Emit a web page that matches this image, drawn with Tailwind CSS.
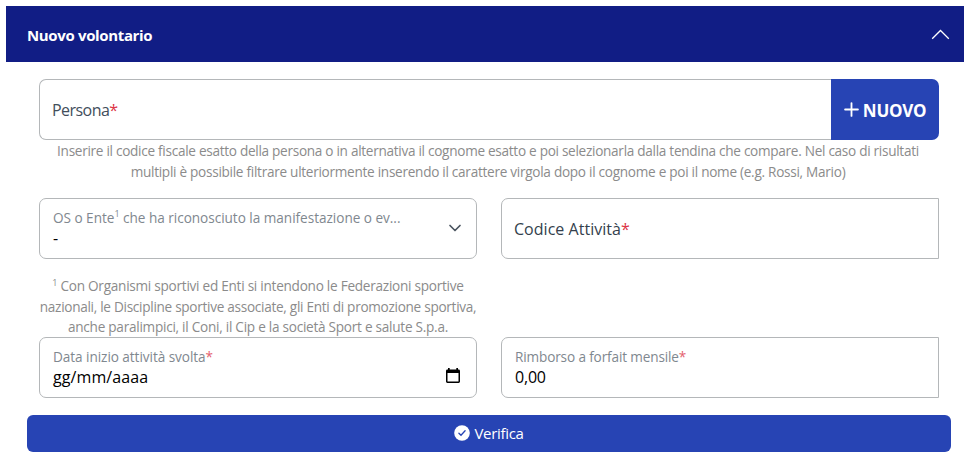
<!DOCTYPE html>
<html lang="it">
<head>
<meta charset="utf-8">
<title>Nuovo volontario</title>
<script src="https://cdn.jsdelivr.net/npm/@tailwindcss/browser@4"></script>
</head>
<body class="h-[458px] overflow-hidden bg-white pt-[6px] pl-[6px] font-['Open_Sans','Noto_Sans',sans-serif] text-black">
<header class="flex h-14 items-center justify-between bg-[#111d85] pr-[14px] pl-[21px] text-white">
  <h1 class="pt-[2px] text-[15px] font-bold tracking-[-0.35px]">Nuovo volontario</h1>
  <svg class="h-[11px] w-[19px]" viewBox="0 0 19 11" fill="none" stroke="currentColor" stroke-width="1.3"><path d="M1.2 9.8 9.5 1.5l8.300 8.300"/></svg>
</header>
<main class="pt-[17px] pr-[13px] pl-[21px]">
  <div class="pr-[12px] pl-3">
    <div class="flex h-[61px]">
      <label class="flex flex-1 items-center rounded-l-[7px] border border-r-0 border-[#b4b7b9] pt-px pl-3 text-[16px] tracking-[-0.55px] text-[#424e5b]">Persona<span class="text-[#dc3545]">*</span></label>
      <button class="flex w-[108px] items-center justify-center gap-1 rounded-r-[7px] bg-[#2744b4] text-[17px] font-bold text-white">
        <svg class="h-[15px] w-[15px]" viewBox="0 0 14 14" stroke="currentColor" stroke-width="1.7" stroke-linecap="round"><path d="M7 1v12M1 7h12"/></svg>
        <span class="pt-[2px] tracking-[-0.3px]">NUOVO</span>
      </button>
    </div>
    <p class="-ml-[2px] pt-px text-center text-[13.600px] leading-[20.500px] whitespace-nowrap text-[#8b8b8b]"><span class="tracking-[-0.29px]">Inserire il codice fiscale esatto della persona o in alternativa il cognome esatto e poi selezionarla dalla tendina che compare. Nel caso di risultati</span><br><span class="tracking-[-0.28px]">multipli è possibile filtrare ulteriormente inserendo il carattere virgola dopo il cognome e poi il nome (e.g. Rossi, Mario)</span></p>
    <div class="mt-4 grid grid-cols-[438px_438px] gap-x-6">
      <div>
        <div class="flex h-[61px] items-center justify-between rounded-[7px] border border-[#b4b7b9] pr-[14px] pl-[13px]">
          <div>
            <div class="text-[13.600px] leading-[20px] tracking-[-0.03px] whitespace-nowrap text-[#7f888f]">OS o Ente<sup class="-top-[6px] text-[9px]">1</sup> che ha riconosciuto la manifestazione o ev...</div>
            <div class="pb-[2px] text-[16px] leading-[20px]">-</div>
          </div>
          <svg class="h-[9px] w-[14px]" viewBox="0 0 14 9" fill="none" stroke="#4b5560" stroke-width="1.700" stroke-linecap="round" stroke-linejoin="round"><path d="m2 1.500 5 5 5-5"/></svg>
        </div>
        <p class="-mb-px pt-[17px] text-center text-[13.600px] leading-[20.500px] whitespace-nowrap text-[#8b8b8b]"><span class="tracking-[-0.26px]"><sup class="-top-[5px] text-[9px]">1</sup> Con Organismi sportivi ed Enti si intendono le Federazioni sportive</span><br><span class="tracking-[-0.29px]">nazionali, le Discipline sportive associate, gli Enti di promozione sportiva,</span><br><span class="tracking-[-0.26px]">anche paralimpici, il Coni, il Cip e la società Sport e salute S.p.a.</span></p>
      </div>
      <label class="flex h-[61px] items-center rounded-l-[7px] border border-[#b4b7b9] pt-px pl-3 text-[16px] tracking-[0.03px] text-[#343f4d]">Codice Attività<span class="text-[#dc3545]">*</span></label>
    </div>
    <div class="grid grid-cols-[438px_438px] gap-x-6">
      <div class="flex h-[61px] items-center justify-between rounded-[7px] border border-[#b4b7b9] pr-[16px] pl-[13px]">
        <div>
          <div class="pt-px text-[13.600px] leading-[20px] tracking-[-0.06px] text-[#7f888f]">Data inizio attività svolta<span class="text-[#e4606d]">*</span></div>
          <div class="pb-px text-[16px] leading-[20px] tracking-[0.1px]">gg/mm/aaaa</div>
        </div>
        <svg class="mt-4 h-[15px] w-[14px]" viewBox="0 0 14 15"><path fill="#000" fill-rule="evenodd" d="M2 0h1.700v1.500h6.600V0H12v1.500h.6q1.400 0 1.400 1.400v10.700Q14 15 12.600 15H1.400Q0 15 0 13.600V2.900q0-1.400 1.400-1.400H2zM1.500 5v8.500h11V5z"/></svg>
      </div>
      <div class="rounded-l-[7px] border border-[#b4b7b9] pt-[9px] pl-[13px]">
        <div class="text-[13.600px] leading-[20px] tracking-[-0.14px] text-[#7f888f]">Rimborso a forfait mensile<span class="text-[#e4606d]">*</span></div>
        <div class="text-[16px] leading-[20px] tracking-[-0.2px]">0,00</div>
      </div>
    </div>
  </div>
  <button class="mt-[17px] flex h-[37px] w-full items-center justify-center gap-1 rounded-[6px] bg-[#2744b4] text-[15px] text-white">
    <svg class="h-4 w-4" viewBox="0 0 16 16"><circle cx="8" cy="8" r="7.800" fill="#fff"/><path d="m4.900 8.200 2.100 2.100 4.100-4.500" fill="none" stroke="#2744b4" stroke-width="1.300" stroke-linecap="round"/></svg>
    <span class="tracking-[-0.3px]">Verifica</span>
  </button>
</main>
</body>
</html>
